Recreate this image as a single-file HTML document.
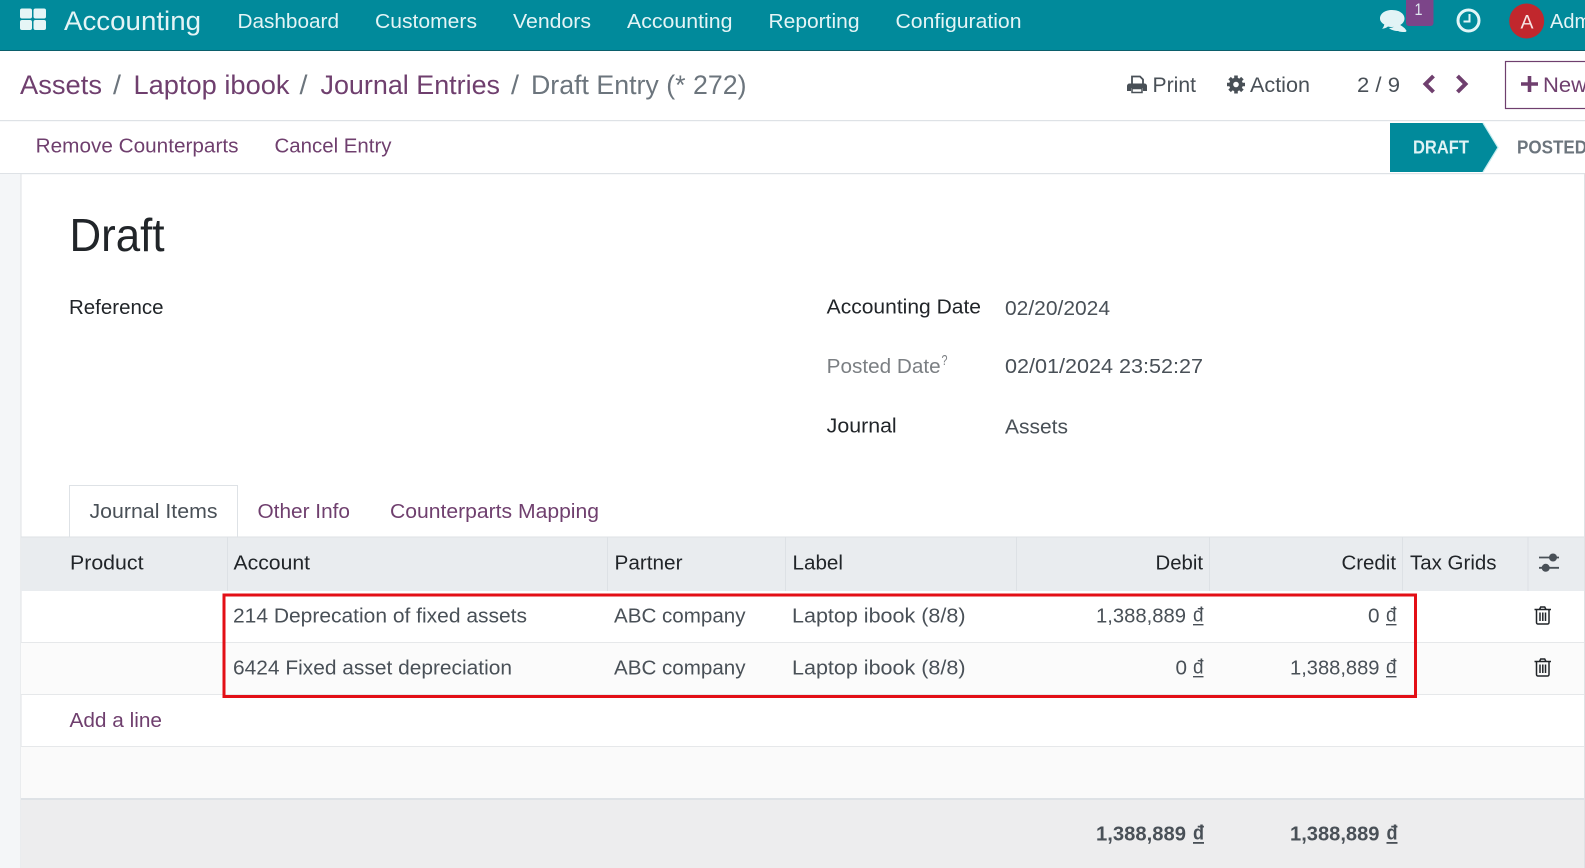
<!DOCTYPE html>
<html lang="en">
<head>
<meta charset="utf-8">
<title>Draft Entry</title>
<style>
html,body{margin:0;padding:0;width:1585px;height:868px;overflow:hidden;background:#fff}
svg{display:block;position:absolute;left:0;top:0}
text{font-family:"Liberation Sans",Arial,sans-serif;white-space:pre}
.nav{font-size:20px;fill:#e4f4f6}
.bc{font-size:27px;fill:#6f3f6e}
.sep{font-size:27px;fill:#6c757d}
.tool{font-size:21px;fill:#495057}
.link{font-size:20px;fill:#6f3f6e}
.lab{font-size:20px;fill:#212529}
.val{font-size:20px;fill:#495057}
.th{font-size:20px;fill:#212529}
.td{font-size:20px;fill:#495057}
.tot{font-size:20px;fill:#495057;font-weight:bold}
</style>
</head>
<body>
<svg width="1585" height="868" viewBox="0 0 1585 868" xmlns="http://www.w3.org/2000/svg">
<rect width="1585" height="868" fill="#fff"/>

<!-- navbar -->
<rect width="1585" height="51" fill="#018a9b"/>
<rect y="50" width="1585" height="1" fill="#0b5f6b"/>
<g fill="#e6f5f6">
<rect x="20" y="8.500" width="12" height="10" rx="2"/>
<rect x="33.500" y="8.500" width="12.500" height="10" rx="2"/>
<rect x="20" y="20" width="12" height="10" rx="2"/>
<rect x="33.500" y="20" width="12.500" height="10" rx="2"/>
</g>
<text x="64" y="30" font-size="27" fill="#e4f4f6" textLength="137" lengthAdjust="spacingAndGlyphs">Accounting</text>
<text class="nav" x="237.500" y="28" textLength="101.500" lengthAdjust="spacingAndGlyphs">Dashboard</text>
<text class="nav" x="375" y="28" textLength="102" lengthAdjust="spacingAndGlyphs">Customers</text>
<text class="nav" x="513" y="28" textLength="78" lengthAdjust="spacingAndGlyphs">Vendors</text>
<text class="nav" x="627" y="28" textLength="105.500" lengthAdjust="spacingAndGlyphs">Accounting</text>
<text class="nav" x="768.500" y="28" textLength="91" lengthAdjust="spacingAndGlyphs">Reporting</text>
<text class="nav" x="895.500" y="28" textLength="126" lengthAdjust="spacingAndGlyphs">Configuration</text>

<!-- comments icon -->
<path d="M1396 23c5 2 9 5 10 7 1 1 0 2-1 2-3 0-5 0-7-1-3 0-7-1-9-3 4 0 7-2 7-5z" fill="#e2f4f6"/>
<path d="M1392 10c7 0 12.500 3.600 12.500 8.500S1399 27 1392 27c-1.500 0-3-.2-4-.5-1.500 1.300-3.500 2-6 2.300 1-1 2-2.500 2.300-4.300-2.800-1.500-4.300-3.700-4.300-6C1380 13.600 1385 10 1392 10z" fill="#e2f4f6"/>
<rect x="1406" y="-4" width="27.500" height="30" rx="3" fill="#7c4589"/>
<text x="1414.500" y="15" font-size="17" fill="#dfe9f0" textLength="8" lengthAdjust="spacingAndGlyphs">1</text>
<!-- clock -->
<circle cx="1468.500" cy="20.500" r="10.500" fill="none" stroke="#e2f5f7" stroke-width="3"/>
<path d="M1469.500 14v7.500h-6" fill="none" stroke="#e2f5f7" stroke-width="2"/>
<!-- avatar -->
<circle cx="1526.700" cy="21" r="17.500" fill="#c1272d"/>
<text x="1520.500" y="28.300" font-size="19" fill="#f7e6e6" textLength="13" lengthAdjust="spacingAndGlyphs">A</text>
<text x="1550" y="28" font-size="20" fill="#e4f4f6">Admin</text>

<!-- breadcrumb -->
<text class="bc" x="20" y="94" textLength="82" lengthAdjust="spacingAndGlyphs">Assets</text>
<text class="sep" x="113" y="94" textLength="8" lengthAdjust="spacingAndGlyphs">/</text>
<text class="bc" x="133.500" y="94" textLength="156" lengthAdjust="spacingAndGlyphs">Laptop ibook</text>
<text class="sep" x="299.500" y="94" textLength="8" lengthAdjust="spacingAndGlyphs">/</text>
<text class="bc" x="320.500" y="94" textLength="179.500" lengthAdjust="spacingAndGlyphs">Journal Entries</text>
<text class="sep" x="511" y="94" textLength="8" lengthAdjust="spacingAndGlyphs">/</text>
<text class="sep" x="531" y="94" textLength="215.500" lengthAdjust="spacingAndGlyphs">Draft Entry (* 272)</text>

<!-- printer -->
<g fill="#495057">
<path d="M1132 84v-7.500h8l3 3V84" fill="none" stroke="#495057" stroke-width="1.800"/>
<path d="M1129.500 83.500h15a2.500 2.500 0 0 1 2.500 2.500v5h-4v-3h-12v3h-4v-5a2.500 2.500 0 0 1 2.500-2.500z"/>
<path d="M1132 88.500h10v4h-10z" fill="none" stroke="#495057" stroke-width="1.500"/>
</g>
<text class="tool" x="1152.500" y="92" textLength="43.500" lengthAdjust="spacingAndGlyphs">Print</text>
<!-- gear -->
<g transform="translate(1236 84.500)">
<circle r="6.800" fill="#495057"/>
<g stroke="#495057" stroke-width="3.600">
<path d="M0-9V9M-9 0H9M-6.400-6.400L6.400 6.400M-6.400 6.400L6.400-6.400"/>
</g>
<circle r="2.800" fill="#fff"/>
</g>
<text class="tool" x="1250" y="92" textLength="60" lengthAdjust="spacingAndGlyphs">Action</text>
<text class="tool" x="1357" y="92" textLength="43" lengthAdjust="spacingAndGlyphs">2 / 9</text>
<path d="M1433.500 76l-8 8 8 8" fill="none" stroke="#6f3f6e" stroke-width="4"/>
<path d="M1457.500 76l8 8-8 8" fill="none" stroke="#6f3f6e" stroke-width="4"/>
<rect x="1505.500" y="61.500" width="100" height="47" fill="#fff" stroke="#6f3f6e" stroke-width="1.200"/>
<path d="M1521 84h17M1529.500 76v16" stroke="#6f3f6e" stroke-width="3.600" fill="none"/>
<text x="1543" y="92" font-size="21" fill="#6f3f6e" textLength="44" lengthAdjust="spacingAndGlyphs">New</text>

<rect y="120" width="1585" height="1.200" fill="#dee2e6"/>

<!-- action bar -->
<text class="link" x="35.700" y="152.500" textLength="202.800" lengthAdjust="spacingAndGlyphs">Remove Counterparts</text>
<text class="link" x="274.500" y="152.500" textLength="117" lengthAdjust="spacingAndGlyphs">Cancel Entry</text>
<polygon points="1390,123 1483,123 1498,147.500 1483,172 1390,172" fill="#018a9b"/>
<path d="M1483 123l15 24.500-15 24.500" fill="none" stroke="#c6ecef" stroke-width="1.200"/>
<text x="1413" y="153.300" font-size="18" font-weight="bold" fill="#dff3f5" textLength="56" lengthAdjust="spacingAndGlyphs">DRAFT</text>
<text x="1517" y="153.300" font-size="18" font-weight="bold" fill="#6c757d" textLength="70" lengthAdjust="spacingAndGlyphs">POSTED</text>
<rect y="173" width="1585" height="1.200" fill="#dee2e6"/>

<!-- sheet sides -->
<rect y="174" width="21" height="694" fill="#f4f6f8"/>
<rect x="20.500" y="174" width="1" height="694" fill="#dfe2e5"/>
<rect x="1584" y="174" width="1" height="694" fill="#dfe2e5"/>

<text x="69.500" y="251" font-size="46" fill="#212529" textLength="95" lengthAdjust="spacingAndGlyphs">Draft</text>
<text class="lab" x="69" y="314" textLength="94.500" lengthAdjust="spacingAndGlyphs">Reference</text>

<text class="lab" x="826.700" y="313.300" textLength="154.300" lengthAdjust="spacingAndGlyphs">Accounting Date</text>
<text class="val" x="1005" y="315" textLength="105" lengthAdjust="spacingAndGlyphs">02/20/2024</text>
<text x="826.700" y="373" font-size="20" fill="#7b7f83" textLength="114" lengthAdjust="spacingAndGlyphs">Posted Date</text>
<text x="941.500" y="365" font-size="15" fill="#7b7f83" textLength="6" lengthAdjust="spacingAndGlyphs">?</text>
<text class="val" x="1005" y="373" textLength="198" lengthAdjust="spacingAndGlyphs">02/01/2024 23:52:27</text>
<text class="lab" x="826.700" y="432.700" textLength="70" lengthAdjust="spacingAndGlyphs">Journal</text>
<text class="val" x="1005" y="433.300" textLength="63" lengthAdjust="spacingAndGlyphs">Assets</text>

<!-- tabs -->
<path d="M69.500 537V485.500H237.500V537" fill="#fff" stroke="#dee2e6" stroke-width="1"/>
<text class="val" x="89.500" y="518" textLength="128" lengthAdjust="spacingAndGlyphs">Journal Items</text>
<text class="link" x="257.500" y="518" textLength="92.500" lengthAdjust="spacingAndGlyphs">Other Info</text>
<text class="link" x="390" y="518" textLength="209" lengthAdjust="spacingAndGlyphs">Counterparts Mapping</text>

<!-- table header -->
<rect x="21" y="537" width="1563" height="54" fill="#e9ecef"/>
<rect x="21" y="536.500" width="1563" height="1" fill="#dee2e6"/>
<g fill="#dde1e5">
<rect x="227" y="537" width="1" height="54"/>
<rect x="607" y="537" width="1" height="54"/>
<rect x="785" y="537" width="1" height="54"/>
<rect x="1016" y="537" width="1" height="54"/>
<rect x="1209" y="537" width="1" height="54"/>
<rect x="1402" y="537" width="1" height="54"/>
<rect x="1527.500" y="537" width="1" height="54"/>
</g>
<text class="th" x="70" y="569.300" textLength="73.500" lengthAdjust="spacingAndGlyphs">Product</text>
<text class="th" x="233.500" y="569.300" textLength="76.500" lengthAdjust="spacingAndGlyphs">Account</text>
<text class="th" x="614.500" y="569.300" textLength="68" lengthAdjust="spacingAndGlyphs">Partner</text>
<text class="th" x="792.500" y="569.300" textLength="50.500" lengthAdjust="spacingAndGlyphs">Label</text>
<text class="th" x="1155.500" y="569.300" textLength="47.500" lengthAdjust="spacingAndGlyphs">Debit</text>
<text class="th" x="1341.500" y="569.300" textLength="54.500" lengthAdjust="spacingAndGlyphs">Credit</text>
<text class="th" x="1410" y="569.300" textLength="86.500" lengthAdjust="spacingAndGlyphs">Tax Grids</text>
<g fill="#495057" stroke="#495057">
<path d="M1539 557.500h20M1539 567.800h20" stroke-width="1.800" fill="none"/>
<circle cx="1553" cy="557.500" r="4" stroke="none"/>
<circle cx="1545.700" cy="567.800" r="4" stroke="none"/>
</g>

<!-- rows -->
<rect x="21" y="643" width="1563" height="51" fill="#fbfbfb"/>
<rect x="21" y="642" width="1563" height="1" fill="#e6e8ea"/>
<rect x="21" y="694" width="1563" height="1" fill="#e6e8ea"/>
<rect x="21" y="746" width="1563" height="1" fill="#e6e8ea"/>
<rect x="21" y="747" width="1563" height="51" fill="#fafafa"/>
<rect x="21" y="798" width="1563" height="2" fill="#dee2e6"/>
<rect x="21" y="800" width="1563" height="68" fill="#ededee"/>

<text class="td" x="233" y="622.700" textLength="294" lengthAdjust="spacingAndGlyphs">214 Deprecation of fixed assets</text>
<text class="td" x="614" y="622.700" textLength="131.500" lengthAdjust="spacingAndGlyphs">ABC company</text>
<text class="td" x="792" y="622.700" textLength="173.500" lengthAdjust="spacingAndGlyphs">Laptop ibook (8/8)</text>
<text class="td" x="1096" y="622.700" textLength="90" lengthAdjust="spacingAndGlyphs">1,388,889</text>
<text class="td" x="1193" y="621.700" textLength="10.500" lengthAdjust="spacingAndGlyphs">đ</text>
<rect x="1193" y="624" width="10.500" height="1.400" fill="#495057"/>
<text class="td" x="1368" y="622.700" textLength="11.500" lengthAdjust="spacingAndGlyphs">0</text>
<text class="td" x="1386" y="621.700" textLength="10.500" lengthAdjust="spacingAndGlyphs">đ</text>
<rect x="1386" y="624" width="10.500" height="1.400" fill="#495057"/>

<text class="td" x="233" y="674.700" textLength="279" lengthAdjust="spacingAndGlyphs">6424 Fixed asset depreciation</text>
<text class="td" x="614" y="674.700" textLength="131.500" lengthAdjust="spacingAndGlyphs">ABC company</text>
<text class="td" x="792" y="674.700" textLength="173.500" lengthAdjust="spacingAndGlyphs">Laptop ibook (8/8)</text>
<text class="td" x="1175.500" y="674.700" textLength="11.500" lengthAdjust="spacingAndGlyphs">0</text>
<text class="td" x="1193" y="673.700" textLength="10.500" lengthAdjust="spacingAndGlyphs">đ</text>
<rect x="1193" y="676" width="10.500" height="1.400" fill="#495057"/>
<text class="td" x="1290" y="674.700" textLength="89.500" lengthAdjust="spacingAndGlyphs">1,388,889</text>
<text class="td" x="1386" y="673.700" textLength="10.500" lengthAdjust="spacingAndGlyphs">đ</text>
<rect x="1386" y="676" width="10.500" height="1.400" fill="#495057"/>

<!-- trash icons -->
<g fill="none" stroke="#212529" stroke-width="1.500" transform="translate(-0.500 0)">
<path d="M1535 609.500h16.500M1540 609.500l1.200-2.500h4l1.300 2.500M1537 609.500v13a1.500 1.500 0 0 0 1.500 1.500h9.500a1.500 1.500 0 0 0 1.500-1.500v-13M1540.500 612.500v8.500M1543.300 612.500v8.500M1546 612.500v8.500"/>
<g transform="translate(0 52)">
<path d="M1535 609.500h16.500M1540 609.500l1.200-2.500h4l1.300 2.500M1537 609.500v13a1.500 1.500 0 0 0 1.500 1.500h9.500a1.500 1.500 0 0 0 1.500-1.500v-13M1540.500 612.500v8.500M1543.300 612.500v8.500M1546 612.500v8.500"/>
</g>
</g>

<text class="link" x="69.500" y="727" textLength="92.500" lengthAdjust="spacingAndGlyphs">Add a line</text>

<!-- totals -->
<text class="tot" x="1096" y="840.700" textLength="90" lengthAdjust="spacingAndGlyphs">1,388,889</text>
<text class="tot" x="1193" y="839.700" textLength="11" lengthAdjust="spacingAndGlyphs">đ</text>
<rect x="1193" y="842" width="11" height="1.800" fill="#495057"/>
<text class="tot" x="1290" y="840.700" textLength="89.500" lengthAdjust="spacingAndGlyphs">1,388,889</text>
<text class="tot" x="1386.500" y="839.700" textLength="11" lengthAdjust="spacingAndGlyphs">đ</text>
<rect x="1386.500" y="842" width="11" height="1.800" fill="#495057"/>

<!-- red highlight -->
<rect x="224" y="595" width="1191.500" height="101.500" fill="none" stroke="#e30f16" stroke-width="3"/>
</svg>
</body>
</html>
